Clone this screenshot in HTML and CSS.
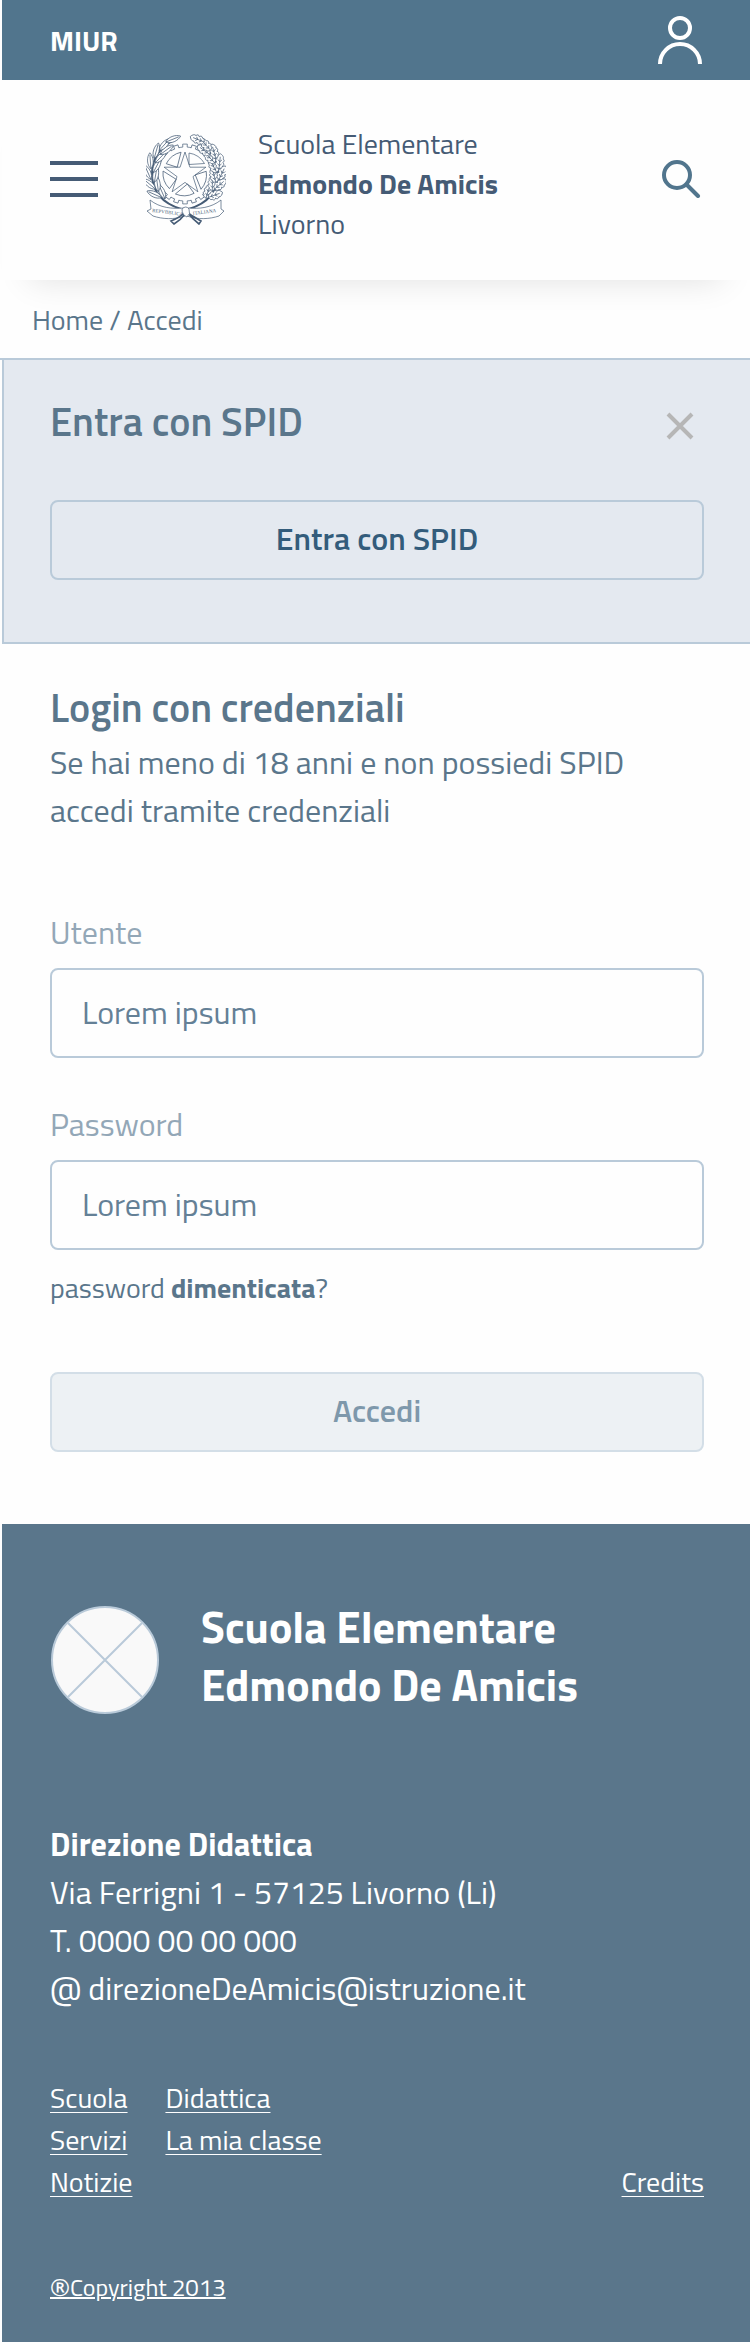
FILE: index.html
```html
<!DOCTYPE html>
<html lang="it">
<head>
<meta charset="utf-8">
<meta name="viewport" content="width=device-width, initial-scale=1">
<title>Accedi - Scuola Elementare Edmondo De Amicis</title>
<link rel="stylesheet" href="styles.css">
</head>
<body>
<div class="topbar">
  <a class="topbar-brand" href="#">MIUR</a>
  <a class="icon-link" href="#" aria-label="Profilo">
    <svg width="48" height="56" viewBox="0 0 48 56" fill="none" stroke="#fff" stroke-width="4"><circle cx="24" cy="16" r="10"/><path d="M4 52a20 20 0 0 1 40 0"/></svg>
  </a>
</div>
<header class="header">
  <button class="menu" type="button" aria-label="Menu"><span class="bar"></span><span class="bar"></span><span class="bar"></span></button>
  <svg class="emblem" width="80" height="92" viewBox="0 0 80 92" fill="none" stroke="#455b75" stroke-width="0.700" role="img" aria-label="Emblema della Repubblica Italiana">
    <defs>
      <path id="tooth" d="M-4.200-26.700-2.200-26.900-2.300-29.900H2.300L2.200-26.900 4.200-26.700"/>
      <g id="olive"><path fill="#fff" d="M0 2C4-2 3.500-10 0-14-3.500-10-4-2 0 2Z"/><path d="M0 2V-12"/></g>
      <g id="oak"><path fill="#fff" d="M0 2c2-1 3.500-1 3-3 2-1 1.500-3 0-3.500 2-1 1.500-3 0-3.500 1-2-1-4-3-5-2 1-4 3-3 5-1.500.500-2 2.500 0 3.500-1.500.500-2 2.500 0 3.500-.500 2 1 2 3 3Z"/><path d="M0 2v-12M0-1l2-2M0-1l-2-2M0-5l2-2M0-5l-2-2"/></g>
    </defs>
    <g transform="translate(39 41)">
      <use href="#tooth"/><use href="#tooth" transform="rotate(18)"/><use href="#tooth" transform="rotate(36)"/><use href="#tooth" transform="rotate(54)"/><use href="#tooth" transform="rotate(72)"/><use href="#tooth" transform="rotate(90)"/><use href="#tooth" transform="rotate(108)"/><use href="#tooth" transform="rotate(126)"/><use href="#tooth" transform="rotate(144)"/><use href="#tooth" transform="rotate(162)"/><use href="#tooth" transform="rotate(180)"/><use href="#tooth" transform="rotate(198)"/><use href="#tooth" transform="rotate(216)"/><use href="#tooth" transform="rotate(234)"/><use href="#tooth" transform="rotate(252)"/><use href="#tooth" transform="rotate(270)"/><use href="#tooth" transform="rotate(288)"/><use href="#tooth" transform="rotate(306)"/><use href="#tooth" transform="rotate(324)"/><use href="#tooth" transform="rotate(342)"/>
      <path d="M0-22 4.900-6.800H20.900L8 2.600 12.900 17.800 0 8.400-12.900 17.800-8 2.600-20.900-6.800H-4.900Z"/>
      <path id="seg" d="M4-21V-9.500L19.500-10.500A22 22 0 0 0 4-21Z"/>
      <use href="#seg" transform="rotate(72)"/><use href="#seg" transform="rotate(144)"/><use href="#seg" transform="rotate(216)"/><use href="#seg" transform="rotate(288)"/>
      <g>
        <path stroke-width="2" d="M-4 35C-23 29-33 17-33 0-33-15-25-26-13-33"/>
        <use href="#olive" transform="rotate(-48) translate(-31 0) rotate(24)"/><use href="#olive" transform="rotate(-42) translate(-34 0) rotate(-24)"/>
        <use href="#olive" transform="rotate(-30) translate(-31 0) rotate(22)"/><use href="#olive" transform="rotate(-24) translate(-34 0) rotate(-26)"/>
        <use href="#olive" transform="rotate(-12) translate(-31 0) rotate(22)"/><use href="#olive" transform="rotate(-6) translate(-35 0) rotate(-18)"/>
        <use href="#olive" transform="rotate(6) translate(-31 0) rotate(22)"/><use href="#olive" transform="rotate(12) translate(-35 0) rotate(-16)"/>
        <use href="#olive" transform="rotate(24) translate(-31 0) rotate(20)"/><use href="#olive" transform="rotate(30) translate(-35 0) rotate(-14)"/>
        <use href="#olive" transform="rotate(42) translate(-31 0) rotate(12)"/><use href="#olive" transform="rotate(46) translate(-35 0) rotate(-4)"/>
        <use href="#olive" transform="rotate(62) translate(-37 0) rotate(6)"/>
      </g>
      <g transform="scale(-1 1)">
        <path stroke-width="2" d="M-4 35C-23 29-33 17-33 0-33-15-25-26-13-33"/>
        <use href="#oak" transform="rotate(-46) translate(-31 0) rotate(28)"/><use href="#oak" transform="rotate(-42) translate(-34 0) rotate(-28)"/>
        <use href="#oak" transform="rotate(-28) translate(-31 0) rotate(28)"/><use href="#oak" transform="rotate(-24) translate(-34 0) rotate(-26)"/>
        <use href="#oak" transform="rotate(-12) translate(-31 0) rotate(26)"/><use href="#oak" transform="rotate(-6) translate(-35 0) rotate(-20)"/>
        <use href="#oak" transform="rotate(6) translate(-31 0) rotate(22)"/><use href="#oak" transform="rotate(12) translate(-35 0) rotate(-18)"/>
        <use href="#oak" transform="rotate(24) translate(-31 0) rotate(20)"/><use href="#oak" transform="rotate(30) translate(-35 0) rotate(-14)"/>
        <use href="#oak" transform="rotate(42) translate(-31 0) rotate(12)"/><use href="#oak" transform="rotate(46) translate(-35 0) rotate(-4)"/>
        <use href="#oak" transform="rotate(62) translate(-37 0) rotate(6)"/>
      </g>
    </g>
    <path fill="#fff" d="M4 67C14 75 26 76 38 75L39 83C28 87 16 86 7 83L1 78 5 76Z M75 67C65 75 53 76 42 75L41 83C52 87 64 86 73 83L78 78 75 76Z"/>
    <path stroke-width="1.600" d="M38 80C35 83 30 86 25 88L28 91C33 88 37 84 40 80M42 80C45 84 49 88 53 91L55 88C50 85 46 83 42 80"/>
    <path fill="#fff" d="M36 76q4-4 7 0 2 5-2 8-5-2-5-8Z"/>
    <text class="motto" x="6" y="79" transform="rotate(7 6 79)">REPVBBLICA</text>
    <text class="motto" x="47" y="82" transform="rotate(-7 47 82)">ITALIANA</text>
  </svg>
  <div class="school"><span>Scuola Elementare</span><strong>Edmondo De Amicis</strong><span>Livorno</span></div>
  <button class="search" type="button" aria-label="Cerca">
    <svg width="40" height="38" viewBox="0 0 40 38" fill="none" stroke="#51758d" stroke-width="4" stroke-linecap="round"><circle cx="15" cy="15" r="13"/><path d="M25 25 36 36"/></svg>
  </button>
</header>
<nav class="breadcrumb" aria-label="Percorso"><a href="#">Home</a> / <a href="#">Accedi</a></nav>
<main>
  <section class="spid">
    <div class="spid-head">
      <h2 class="title">Entra con SPID</h2>
      <button class="close" type="button" aria-label="Chiudi"><svg width="28" height="28" viewBox="0 0 28 28" stroke="#b6b6b6" stroke-width="4"><path d="M2 2 26 26M26 2 2 26"/></svg></button>
    </div>
    <button class="button" type="button">Entra con SPID</button>
  </section>
  <form class="login">
    <h2 class="title">Login con credenziali</h2>
    <p class="intro">Se hai meno di 18 anni e non possiedi SPID accedi tramite credenziali</p>
    <div class="group">
      <label class="label" for="user">Utente</label>
      <input class="field" id="user" type="text" placeholder="Lorem ipsum">
    </div>
    <div class="group">
      <label class="label" for="pass">Password</label>
      <input class="field" id="pass" type="password" placeholder="Lorem ipsum">
    </div>
    <a class="forgot" href="#">password <strong>dimenticata</strong>?</a>
    <button class="button button-disabled" type="submit" disabled>Accedi</button>
  </form>
</main>
<footer class="footer">
  <div class="footer-brand">
    <svg width="110" height="110" viewBox="0 0 110 110" fill="none" stroke="#b9cad9" stroke-width="2"><circle cx="55" cy="55" r="53" fill="#f9f9f9"/><path d="M18 18 92 92M92 18 18 92"/></svg>
    <h2 class="footer-title">Scuola Elementare<br>Edmondo De Amicis</h2>
  </div>
  <address class="address"><strong>Direzione Didattica</strong><span>Via Ferrigni 1 - 57125 Livorno (Li)</span><span>T. 0000 00 00 000</span><span>@ direzioneDeAmicis@istruzione.it</span></address>
  <nav class="links" aria-label="Collegamenti">
    <ul class="links-col"><li><a href="#">Scuola</a></li><li><a href="#">Servizi</a></li><li><a href="#">Notizie</a></li></ul>
    <ul class="links-col"><li><a href="#">Didattica</a></li><li><a href="#">La mia classe</a></li></ul>
    <a class="credits" href="#">Credits</a>
  </nav>
  <a class="copyright" href="#"><span class="mark">®</span>Copyright 2013</a>
</footer>
</body>
</html>
```
FILE: styles.css
```css
* { box-sizing: border-box; }
body {
  margin: 0;
  background: #fefefe;
  color: #5a768b;
  font-family: "Titillium Web", Roboto, "Noto Sans", sans-serif;
  font-size: 32px;
  line-height: 48px;
  font-weight: 400;
}
h2, p, ul { margin: 0; padding: 0; }
ul { list-style: none; }
a { color: inherit; text-decoration: none; }
button { margin: 0; padding: 0; border: 0; background: none; font: inherit; color: inherit; }
svg { display: block; flex: none; }
strong { font-weight: 700; }

.topbar {
  display: flex;
  align-items: center;
  justify-content: space-between;
  height: 80px;
  margin-left: 2px;
  padding: 0 46px 0 48px;
  background: #51758d;
  color: #fff;
}
.topbar-brand { padding-top: 2px; font-size: 28px; font-weight: 700; }

.header {
  display: flex;
  align-items: center;
  margin-left: 2px;
  padding: 34px 48px 36px;
  background: #fefefe;
  color: #455b75;
  box-shadow: 0 28px 32px -28px rgba(0, 0, 0, 0.12);
}
.menu { display: flex; flex-direction: column; gap: 12px; width: 48px; margin-right: 48px; }
.bar { height: 4px; background: #455b75; }
.motto { font-family: "Liberation Serif", serif; font-size: 5px; fill: #455b75; stroke: none; }
.school {
  display: flex;
  flex-direction: column;
  margin-left: 32px;
  padding-top: 10px;
  font-size: 28px;
  line-height: 40px;
}
.search { margin-left: auto; }

.breadcrumb {
  padding: 16px 32px 14px;
  border-bottom: 2px solid #b9cad9;
  font-size: 28px;
}

.spid {
  margin-left: 2px;
  padding: 34px 46px 62px;
  border-left: 2px solid #b9cad9;
  border-bottom: 2px solid #b9cad9;
  background: #e4e9f0;
}
.spid-head {
  display: flex;
  align-items: center;
  justify-content: space-between;
  margin-bottom: 50px;
  padding-right: 10px;
}
.close { padding-top: 8px; }
.title { font-size: 40px; line-height: 56px; font-weight: 600; }
.button {
  display: block;
  width: 100%;
  height: 80px;
  padding-bottom: 4px;
  border: 2px solid #b9cad9;
  border-radius: 8px;
  color: #335c7b;
  font-size: 32px;
  font-weight: 600;
}
.button-disabled { border-color: #d3dee7; background: #edf1f4; color: #7e98ab; }

.login { display: flex; flex-direction: column; padding: 36px 46px 72px 50px; }
.intro { max-width: 600px; margin-top: 2px; margin-bottom: 74px; }
.group { display: flex; flex-direction: column; gap: 12px; }
.group + .group { margin-top: 42px; }
.label { color: #93a7b7; }
.field {
  width: 100%;
  height: 90px;
  margin: 0;
  padding: 0 30px 2px;
  border: 2px solid #b9cad9;
  border-radius: 8px;
  background: #fefefe;
  color: #5a768b;
  font: inherit;
}
.field::placeholder { color: #648096; opacity: 1; }
.forgot { align-self: flex-start; margin: 14px 0 60px; font-size: 28px; }

.footer { margin-left: 2px; padding: 74px 46px 35px 48px; background: #5a768b; color: #fff; }
.footer-brand { display: flex; align-items: center; gap: 41px; margin-bottom: 98px; }
.footer-title { padding-bottom: 8px; font-size: 44px; line-height: 58px; font-weight: 700; }
.address { display: flex; flex-direction: column; margin-bottom: 65px; font-style: normal; }
.links { display: flex; gap: 33px; margin-bottom: 64px; font-size: 28px; line-height: 42px; }
.links a { text-decoration: underline; text-decoration-thickness: 1px; text-underline-offset: 4px; }
.credits { margin-left: auto; align-self: flex-end; }
.copyright { display: block; font-size: 24px; line-height: 40px; text-decoration: underline; text-decoration-thickness: 2px; }
.mark { font-family: "Noto Sans", sans-serif; line-height: 1; }
```
